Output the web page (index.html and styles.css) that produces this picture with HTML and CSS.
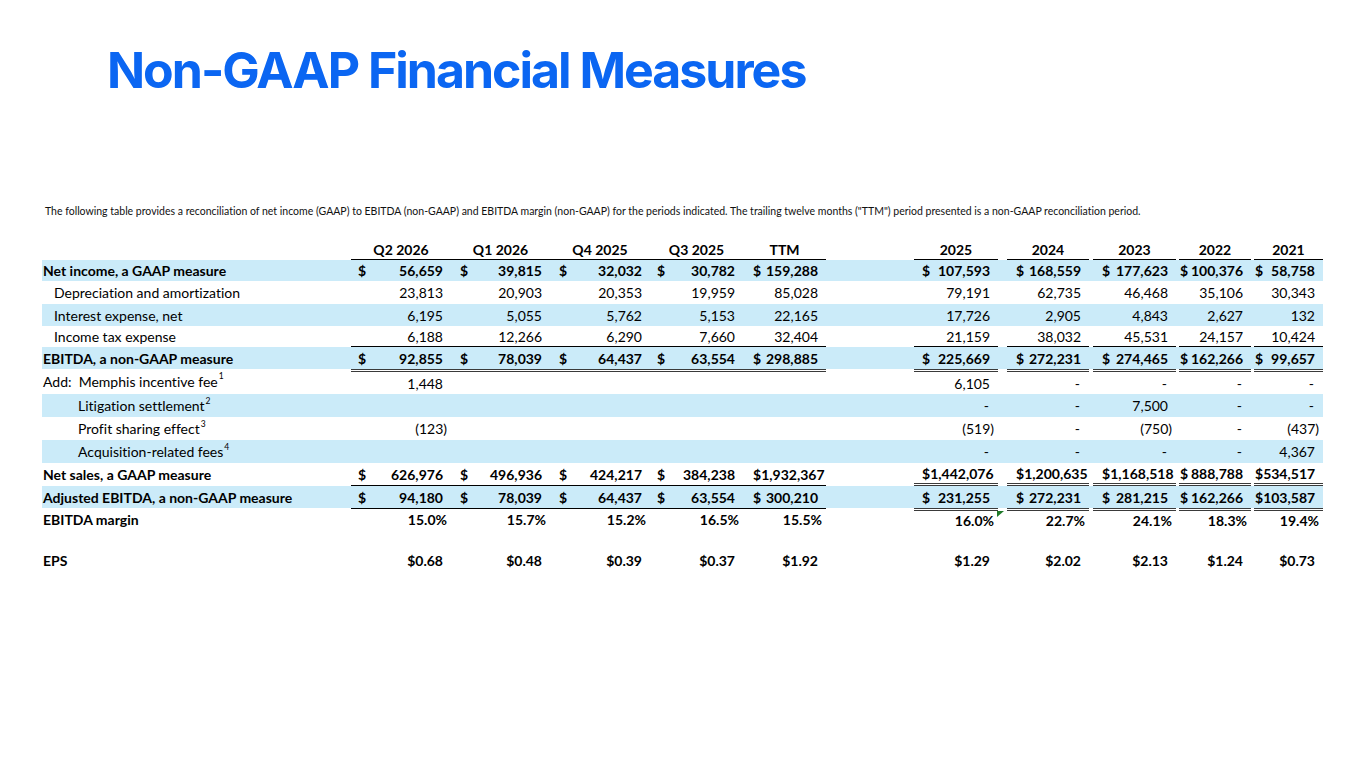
FILE: index.html
```html
<!DOCTYPE html>
<html lang="en">
<head>
<meta charset="utf-8">
<title>Non-GAAP Financial Measures</title>
<link rel="stylesheet" href="styles.css">
</head>
<body>
<div class="page">
  <h1 class="title">Non-GAAP Financial Measures</h1>
  <p class="intro">The following table provides a reconciliation of net income (GAAP) to EBITDA (non-GAAP) and EBITDA margin (non-GAAP) for the periods indicated. The trailing twelve months ("TTM") period presented is a non-GAAP reconciliation period.</p>

  <div class="table">
    <div class="row head">
      <div class="l"></div>
      <div class="c">Q2 2026</div><div class="c">Q1 2026</div><div class="c">Q4 2025</div><div class="c">Q3 2025</div><div class="c">TTM</div>
      <div class="g"></div>
      <div class="c">2025</div><div class="c">2024</div><div class="c">2023</div><div class="c">2022</div><div class="c">2021</div>
    </div>

    <div class="row b band h21">
      <div class="l">Net income, a GAAP measure</div>
      <div class="c"><span>$</span><span class="v">56,659</span></div>
      <div class="c"><span>$</span><span class="v">39,815</span></div>
      <div class="c"><span>$</span><span class="v">32,032</span></div>
      <div class="c"><span>$</span><span class="v">30,782</span></div>
      <div class="c"><span>$</span><span class="v">159,288</span></div>
      <div class="g"></div>
      <div class="c"><span>$</span><span class="v">107,593</span></div>
      <div class="c"><span>$</span><span class="v">168,559</span></div>
      <div class="c"><span>$</span><span class="v">177,623</span></div>
      <div class="c"><span>$</span><span class="v">100,376</span></div>
      <div class="c"><span>$</span><span class="v">58,758</span></div>
    </div>

    <div class="row h23">
      <div class="l i1">Depreciation and amortization</div>
      <div class="c"><span class="v">23,813</span></div>
      <div class="c"><span class="v">20,903</span></div>
      <div class="c"><span class="v">20,353</span></div>
      <div class="c"><span class="v">19,959</span></div>
      <div class="c"><span class="v">85,028</span></div>
      <div class="g"></div>
      <div class="c"><span class="v">79,191</span></div>
      <div class="c"><span class="v">62,735</span></div>
      <div class="c"><span class="v">46,468</span></div>
      <div class="c"><span class="v">35,106</span></div>
      <div class="c"><span class="v">30,343</span></div>
    </div>

    <div class="row band h22">
      <div class="l i1">Interest expense, net</div>
      <div class="c"><span class="v">6,195</span></div>
      <div class="c"><span class="v">5,055</span></div>
      <div class="c"><span class="v">5,762</span></div>
      <div class="c"><span class="v">5,153</span></div>
      <div class="c"><span class="v">22,165</span></div>
      <div class="g"></div>
      <div class="c"><span class="v">17,726</span></div>
      <div class="c"><span class="v">2,905</span></div>
      <div class="c"><span class="v">4,843</span></div>
      <div class="c"><span class="v">2,627</span></div>
      <div class="c"><span class="v">132</span></div>
    </div>

    <div class="row h21 under">
      <div class="l i1">Income tax expense</div>
      <div class="c"><span class="v">6,188</span></div>
      <div class="c"><span class="v">12,266</span></div>
      <div class="c"><span class="v">6,290</span></div>
      <div class="c"><span class="v">7,660</span></div>
      <div class="c"><span class="v">32,404</span></div>
      <div class="g"></div>
      <div class="c"><span class="v">21,159</span></div>
      <div class="c"><span class="v">38,032</span></div>
      <div class="c"><span class="v">45,531</span></div>
      <div class="c"><span class="v">24,157</span></div>
      <div class="c"><span class="v">10,424</span></div>
    </div>

    <div class="row b band h22">
      <div class="l">EBITDA, a non-GAAP measure</div>
      <div class="c"><span>$</span><span class="v">92,855</span></div>
      <div class="c"><span>$</span><span class="v">78,039</span></div>
      <div class="c"><span>$</span><span class="v">64,437</span></div>
      <div class="c"><span>$</span><span class="v">63,554</span></div>
      <div class="c"><span>$</span><span class="v">298,885</span></div>
      <div class="g"></div>
      <div class="c"><span>$</span><span class="v">225,669</span></div>
      <div class="c"><span>$</span><span class="v">272,231</span></div>
      <div class="c"><span>$</span><span class="v">274,465</span></div>
      <div class="c"><span>$</span><span class="v">162,266</span></div>
      <div class="c"><span>$</span><span class="v">99,657</span></div>
    </div>

    <div class="row h25 dtop">
      <div class="l">Add:&nbsp; Memphis incentive fee<sup>1</sup></div>
      <div class="c"><span class="v">1,448</span></div>
      <div class="c"></div>
      <div class="c"></div>
      <div class="c"></div>
      <div class="c"></div>
      <div class="g"></div>
      <div class="c"><span class="v">6,105</span></div>
      <div class="c"><span class="dash">-</span></div>
      <div class="c"><span class="dash">-</span></div>
      <div class="c"><span class="dash">-</span></div>
      <div class="c"><span class="dash">-</span></div>
    </div>

    <div class="row band h23">
      <div class="l i2">Litigation settlement<sup>2</sup></div>
      <div class="c"></div>
      <div class="c"></div>
      <div class="c"></div>
      <div class="c"></div>
      <div class="c"></div>
      <div class="g"></div>
      <div class="c"><span class="dash">-</span></div>
      <div class="c"><span class="dash">-</span></div>
      <div class="c"><span class="v">7,500</span></div>
      <div class="c"><span class="dash">-</span></div>
      <div class="c"><span class="dash">-</span></div>
    </div>

    <div class="row h23">
      <div class="l i2">Profit sharing effect<sup>3</sup></div>
      <div class="c"><span class="p">(123)</span></div>
      <div class="c"></div>
      <div class="c"></div>
      <div class="c"></div>
      <div class="c"></div>
      <div class="g"></div>
      <div class="c"><span class="p">(519)</span></div>
      <div class="c"><span class="dash">-</span></div>
      <div class="c"><span class="p">(750)</span></div>
      <div class="c"><span class="dash">-</span></div>
      <div class="c"><span class="p">(437)</span></div>
    </div>

    <div class="row band h23">
      <div class="l i2">Acquisition-related fees<sup>4</sup></div>
      <div class="c"></div>
      <div class="c"></div>
      <div class="c"></div>
      <div class="c"></div>
      <div class="c"></div>
      <div class="g"></div>
      <div class="c"><span class="dash">-</span></div>
      <div class="c"><span class="dash">-</span></div>
      <div class="c"><span class="dash">-</span></div>
      <div class="c"><span class="dash">-</span></div>
      <div class="c"><span class="v">4,367</span></div>
    </div>

    <div class="row b h23 mixunder">
      <div class="l">Net sales, a GAAP measure</div>
      <div class="c"><span>$</span><span class="v">626,976</span></div>
      <div class="c"><span>$</span><span class="v">496,936</span></div>
      <div class="c"><span>$</span><span class="v">424,217</span></div>
      <div class="c"><span>$</span><span class="v">384,238</span></div>
      <div class="c"><span>$</span><span class="v">1,932,367</span></div>
      <div class="g"></div>
      <div class="c"><span>$</span><span class="v">1,442,076</span></div>
      <div class="c"><span>$</span><span class="v">1,200,635</span></div>
      <div class="c"><span>$</span><span class="v">1,168,518</span></div>
      <div class="c"><span>$</span><span class="v">888,788</span></div>
      <div class="c"><span>$</span><span class="v">534,517</span></div>
    </div>

    <div class="row b band h22">
      <div class="l">Adjusted EBITDA, a non-GAAP measure</div>
      <div class="c"><span>$</span><span class="v">94,180</span></div>
      <div class="c"><span>$</span><span class="v">78,039</span></div>
      <div class="c"><span>$</span><span class="v">64,437</span></div>
      <div class="c"><span>$</span><span class="v">63,554</span></div>
      <div class="c"><span>$</span><span class="v">300,210</span></div>
      <div class="g"></div>
      <div class="c"><span>$</span><span class="v">231,255</span></div>
      <div class="c"><span>$</span><span class="v">272,231</span></div>
      <div class="c"><span>$</span><span class="v">281,215</span></div>
      <div class="c"><span>$</span><span class="v">162,266</span></div>
      <div class="c"><span>$</span><span class="v">103,587</span></div>
    </div>

    <div class="row b h22 mixtop">
      <div class="l">EBITDA margin</div>
      <div class="c"><span class="p">15.0%</span></div>
      <div class="c"><span class="p">15.7%</span></div>
      <div class="c"><span class="p">15.2%</span></div>
      <div class="c"><span class="p">16.5%</span></div>
      <div class="c"><span class="p">15.5%</span></div>
      <div class="g"></div>
      <div class="c"><span class="p">16.0%</span></div>
      <div class="c flag"><span class="p">22.7%</span></div>
      <div class="c"><span class="p">24.1%</span></div>
      <div class="c"><span class="p">18.3%</span></div>
      <div class="c"><span class="p">19.4%</span></div>
    </div>

    <div class="row h19"></div>

    <div class="row b h22">
      <div class="l">EPS</div>
      <div class="c"><span class="v">$0.68</span></div>
      <div class="c"><span class="v">$0.48</span></div>
      <div class="c"><span class="v">$0.39</span></div>
      <div class="c"><span class="v">$0.37</span></div>
      <div class="c"><span class="v">$1.92</span></div>
      <div class="g"></div>
      <div class="c"><span class="v">$1.29</span></div>
      <div class="c"><span class="v">$2.02</span></div>
      <div class="c"><span class="v">$2.13</span></div>
      <div class="c"><span class="v">$1.24</span></div>
      <div class="c"><span class="v">$0.73</span></div>
    </div>
  </div>
</div>
</body>
</html>
```

FILE: styles.css
```css
html, body {
  margin: 0;
  padding: 0;
  background: #ffffff;
}

.page {
  width: 1365px;
  height: 768px;
  overflow: hidden;
  padding-top: 40px;
  box-sizing: border-box;
  font-family: Lato, "Open Sans", sans-serif;
  font-variant-ligatures: none;
  color: #000;
}

.title {
  margin: 0 0 0 107px;
  font-family: Inter, "Liberation Sans", sans-serif;
  font-weight: 700;
  font-size: 50px;
  line-height: 60px;
  letter-spacing: -2px;
  color: #0b66f2;
}

.intro {
  margin: 105px 0 0 45px;
  font-size: 10.5px;
  line-height: 12px;
  color: #111;
  white-space: nowrap;
}

.table {
  margin: 23px 0 0 42px;
  width: 1281px;
}

.row {
  display: grid;
  grid-template-columns: 309px 100px 99px 100px 93px 83px 88px 93px 86px 86px 75px 69px;
  align-items: stretch;
  font-size: 14px;
  box-sizing: border-box;
}

.row.b { font-weight: 700; }
.band { background: #cbebf9; }

.h19 { height: 19px; }
.h21 { height: 21px; }
.h22 { height: 22px; }
.h23 { height: 23px; }
.h25 { height: 25px; }

.l {
  display: flex;
  align-items: center;
  padding-left: 1px;
  white-space: nowrap;
}
.l.i1 { padding-left: 12px; }
.l.i2 { padding-left: 36px; }

.l sup {
  font-size: 8.5px;
  line-height: 1;
  align-self: flex-start;
  margin-top: 3px;
  margin-left: 1px;
}

.c {
  display: flex;
  align-items: center;
  justify-content: space-between;
  padding-right: 4px;
  box-sizing: border-box;
  white-space: nowrap;
  position: relative;
}
.c .v, .c .dash, .c .p { margin-left: auto; }
.c .v { padding-right: 4px; }
.c .dash { padding-right: 5px; }

/* $ sign offsets per column */
.row > :nth-child(2) { padding-left: 7px; }
.row > :nth-child(3) { padding-left: 9px; }
.row > :nth-child(4) { padding-left: 9px; }
.row > :nth-child(5) { padding-left: 7px; }
.row > :nth-child(6) { padding-left: 10px; }
.row > :nth-child(8) { padding-left: 8px; margin-right: 9px; }
.row > :nth-child(9) { padding-left: 9px; margin-right: 4px; }
.row > :nth-child(10) { padding-left: 9px; margin-right: 3px; }
.row > :nth-child(11) { padding-left: 1px; margin-right: 3px; }
.row > :nth-child(12) { padding-left: 1px; }

/* header */
.head {
  height: 20px;
  font-weight: 700;
}
.head .c {
  justify-content: center;
  padding: 0;
  border-bottom: 1px solid #000;
}

/* borders */
.under .c { border-bottom: 1px solid #000; }
.dtop .c { border-top: 3px double #3a3a3a; }
.mixunder > :nth-child(-n+6).c { border-bottom: 1px solid #000; }
.mixunder > :nth-child(n+8).c { border-bottom: 3px double #3a3a3a; }
.mixtop > :nth-child(-n+6).c { border-top: 1px solid #000; }
.mixtop > :nth-child(n+8).c { border-top: 3px double #3a3a3a; }

/* excel error indicator */
.flag::before {
  content: "";
  position: absolute;
  left: -10px;
  top: 0;
  width: 0;
  height: 0;
  border-top: 6px solid #1f7a2a;
  border-right: 7px solid transparent;
}
```
